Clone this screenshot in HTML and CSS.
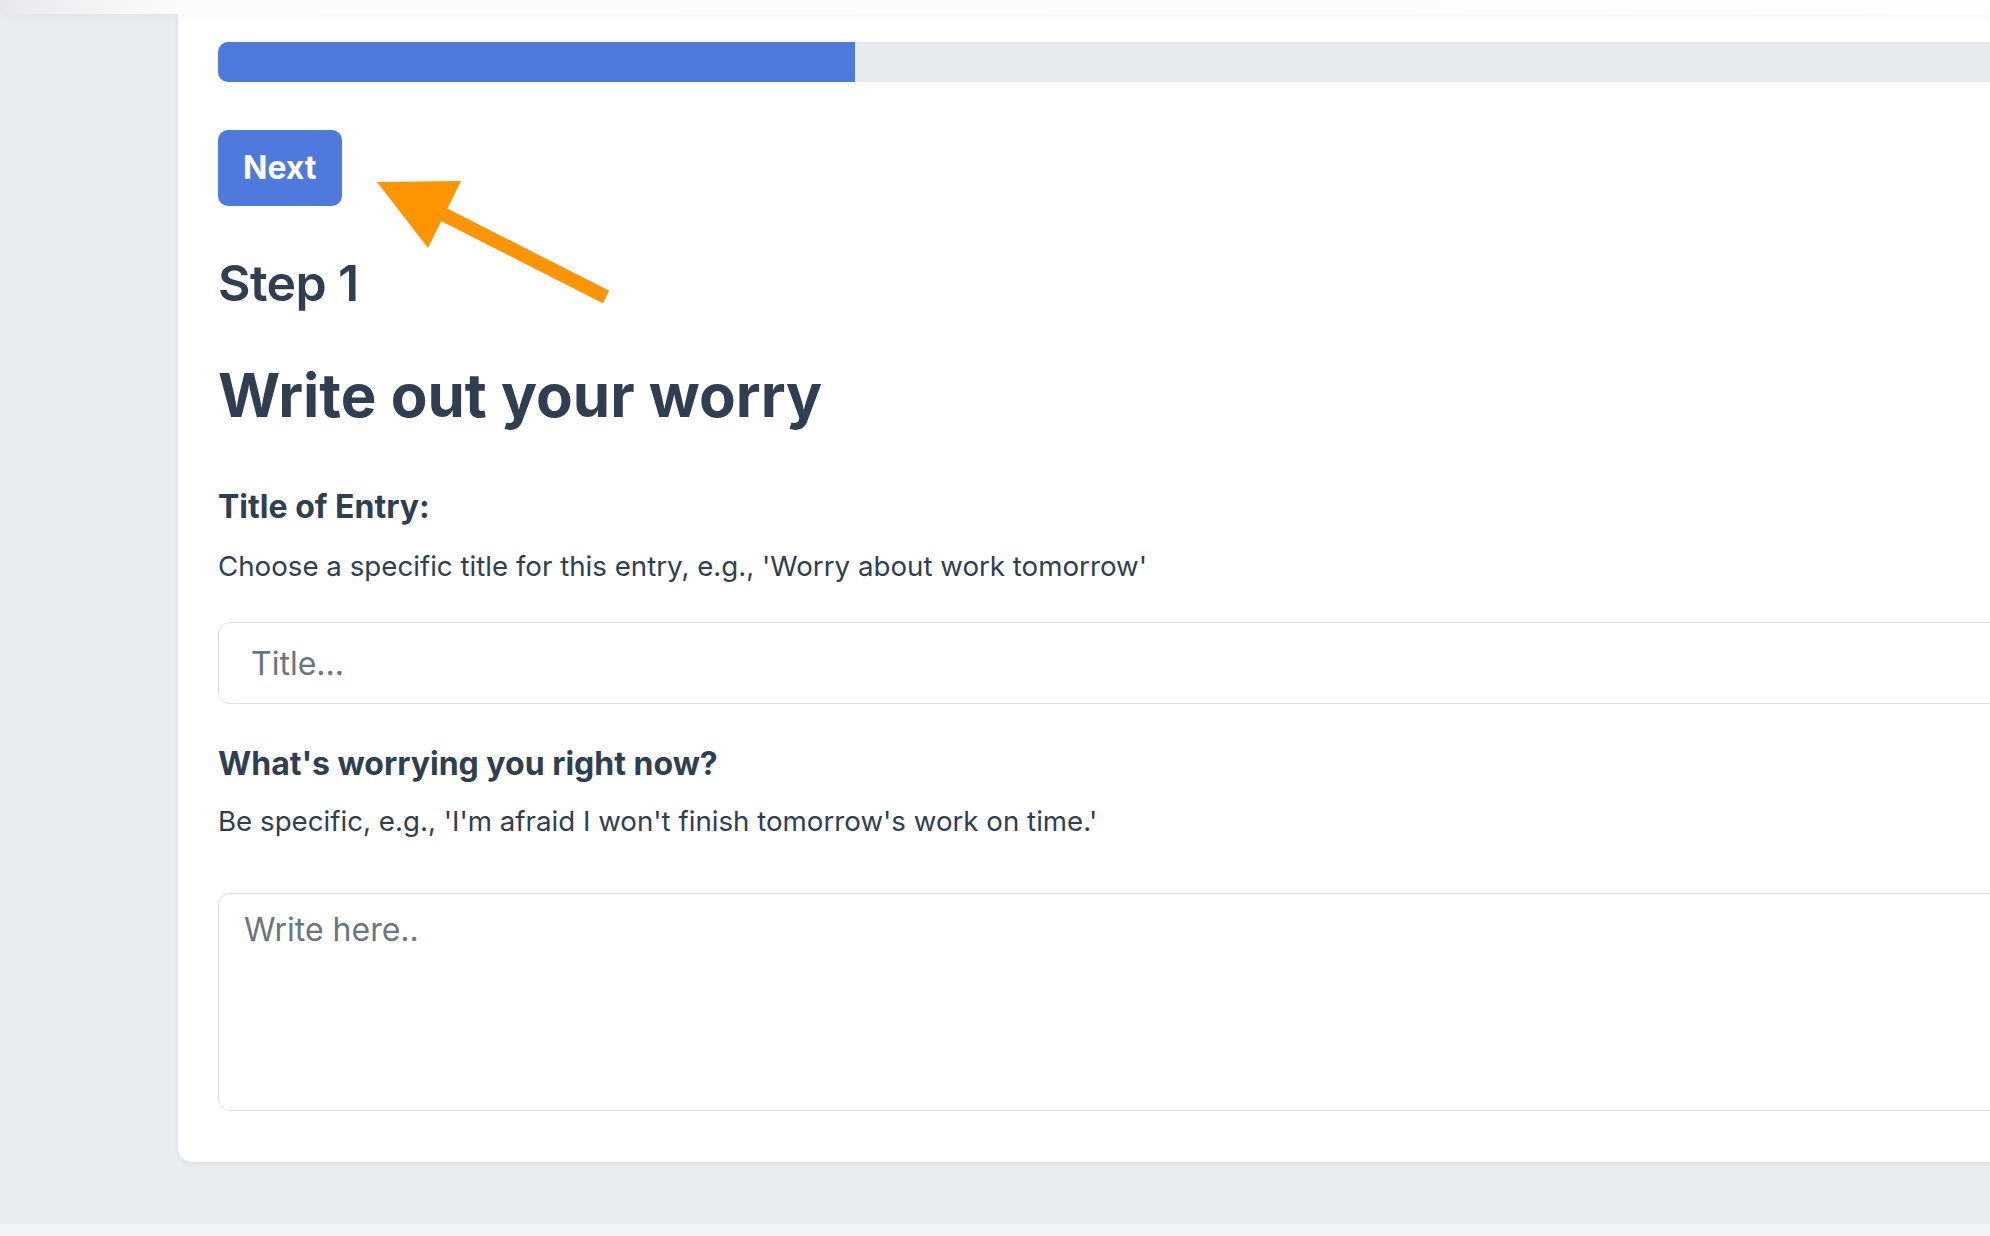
FILE: index.html
```html
<!DOCTYPE html>
<html lang="en">
<head>
<meta charset="utf-8">
<title>Write out your worry</title>
<link rel="stylesheet" href="styles.css">
</head>
<body>
<div class="page">
  <div class="topbar"></div>
  <main class="main">
    <section class="card">
      <div class="progress"><div class="progress-fill" style="width: 637px"></div></div>
      <button class="btn-next" type="button">Next</button>
      <h2 class="step">Step 1</h2>
      <h1 class="title">Write out your worry</h1>
      <label class="field-label label-first" for="entry-title">Title of Entry:</label>
      <p class="hint">Choose a specific title for this entry, e.g., 'Worry about work tomorrow'</p>
      <input id="entry-title" class="text-input" type="text" placeholder="Title...">
      <label class="field-label label-second" for="worry">What's worrying you right now?</label>
      <p class="hint hint-second">Be specific, e.g., 'I'm afraid I won't finish tomorrow's work on time.'</p>
      <textarea id="worry" class="text-area" placeholder="Write here.."></textarea>
    </section>
  </main>
  <div class="footer"></div>
  <svg class="arrow" width="700" height="360" viewBox="0 0 700 360" aria-hidden="true">
    <polygon points="428.2,198.8 609.2,290.8 602.8,303.2 421.8,211.2" fill="#fd9402"/>
    <polygon points="377,182 461,181 428,248" fill="#fd9402"/>
  </svg>
</div>
</body>
</html>
```
FILE: styles.css
```css
html, body {
  margin: 0;
  padding: 0;
  overflow: hidden;
}

body {
  width: 1990px;
  height: 1236px;
  background: #e9ecf1;
  font-family: Inter, "Noto Sans", "Liberation Sans", sans-serif;
  color: #303e51;
}

.page {
  position: relative;
  height: 1236px;
  display: flex;
  flex-direction: column;
}

.topbar {
  height: 14px;
  flex: none;
  background: linear-gradient(90deg, #e6e8eb 0, #f2f3f5 90px, #fcfcfd 190px, #fdfdfd 100%);
  box-shadow: 0 3px 10px rgba(0, 0, 0, 0.035);
  position: relative;
  z-index: 1;
}

.main {
  flex: none;
  padding: 0 0 62px 178px;
}

.card {
  width: 1900px;
  box-sizing: border-box;
  background: #ffffff;
  border-radius: 0 0 0 14px;
  box-shadow: 0 2px 5px rgba(30, 40, 60, 0.07);
  padding: 28px 40px 51px;
  display: flex;
  flex-direction: column;
  align-items: flex-start;
}

.progress {
  width: 100%;
  height: 40px;
  background: #e7ebee;
  border-radius: 10px;
  overflow: hidden;
  display: flex;
}

.progress-fill {
  height: 100%;
  background: #4e7ade;
}

.btn-next {
  margin-top: 48px;
  height: 76px;
  padding: 0 25px;
  border: none;
  border-radius: 10px;
  background: #4e7ade;
  color: #ffffff;
  font-family: Inter, "Noto Sans", sans-serif;
  font-size: 32px;
  font-weight: 700;
  line-height: 1;
}

.step {
  margin: 47px 0 0;
  font-size: 50px;
  line-height: 1.2;
  font-weight: 600;
  letter-spacing: -0.6px;
}

.title {
  margin: 46px 0 0;
  font-size: 60px;
  line-height: 1.2;
  font-weight: 700;
}

.field-label {
  display: block;
  font-size: 32px;
  line-height: 48px;
  font-weight: 700;
}

.label-first {
  margin-top: 52px;
}

.label-second {
  margin-top: 36px;
}

.hint {
  margin: 14px 0 0;
  font-size: 27.7px;
  line-height: 42px;
  font-weight: 400;
}

.hint-second {
  margin-top: 12px;
}

.text-input {
  margin-top: 35px;
  width: 100%;
  height: 82px;
  box-sizing: border-box;
  padding: 0 32px;
  border: 1.5px solid #dee2e6;
  border-radius: 12px;
  font-family: Inter, "Noto Sans", sans-serif;
  font-size: 32px;
  color: #303e51;
  background: #fff;
  outline: none;
}

.text-area {
  margin-top: 50.5px;
  width: 100%;
  height: 218px;
  box-sizing: border-box;
  padding: 12px 25px;
  border: 1.5px solid #dee2e6;
  border-radius: 12px;
  font-family: Inter, "Noto Sans", sans-serif;
  font-size: 32px;
  line-height: 1.5;
  color: #303e51;
  background: #fff;
  resize: none;
  outline: none;
}

.text-input::placeholder,
.text-area::placeholder {
  color: #6c757d;
  opacity: 1;
}

.footer {
  height: 12px;
  flex: none;
  background: #f3f4f6;
}

.arrow {
  position: absolute;
  left: 0;
  top: 0;
  pointer-events: none;
}
```
